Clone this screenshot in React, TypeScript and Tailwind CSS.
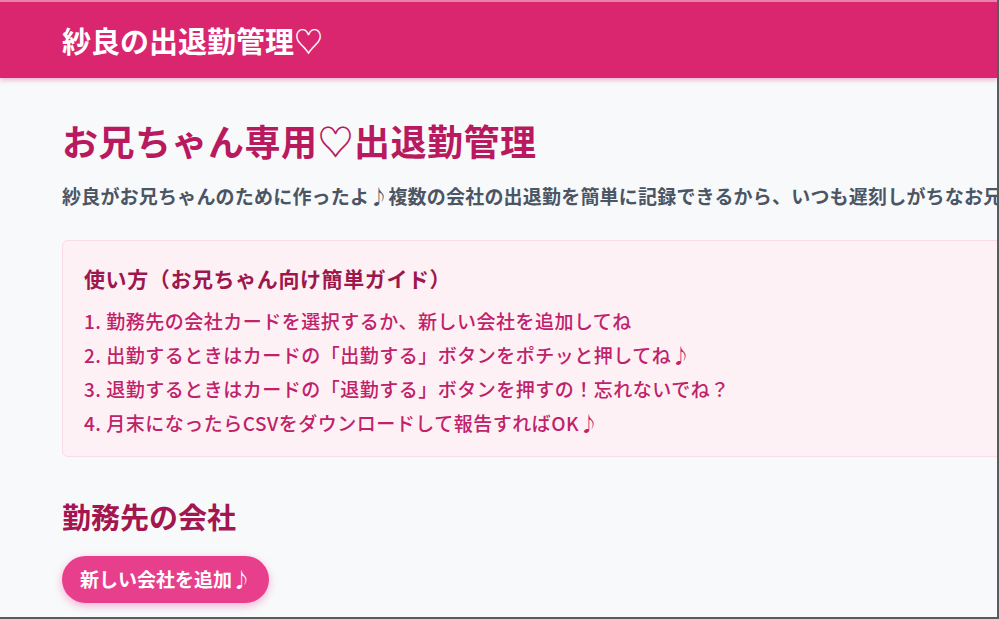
const STEPS = [
  '勤務先の会社カードを選択するか、新しい会社を追加してね',
  '出勤するときはカードの「出勤する」ボタンをポチッと押してね♪',
  '退勤するときはカードの「退勤する」ボタンを押すの！忘れないでね？',
  '月末になったらCSVをダウンロードして報告すればOK♪',
];

const App = () => {
  return (
    <div className="h-[619px] w-[999px] overflow-hidden border-r-2 border-b-2 border-[#5b5b5b] bg-[#f8f9fb] font-['Noto_Sans_CJK_JP','Noto_Sans',sans-serif]">
      <header className="flex h-[78px] items-center border-t-2 border-[#e882ab] bg-[#d9266f] px-[62px] shadow-[0_2px_5px_rgba(219,39,119,0.35)]">
        <h1 className="text-[29px] font-bold leading-none text-white">紗良の出退勤管理♡</h1>
      </header>

      <main className="w-[1200px] px-[62px] pt-[40px]">
        <h2 className="text-[36px] font-bold leading-[44px] tracking-[0.5px] text-[#b8195f]">
          お兄ちゃん専用♡出退勤管理
        </h2>
        <p className="mt-[20px] whitespace-nowrap text-[19px] font-semibold leading-[28px] tracking-[0.2px] text-[#4b5563]">
          紗良がお兄ちゃんのために作ったよ♪複数の会社の出退勤を簡単に記録できるから、いつも遅刻しがちなお兄ちゃんでも大丈夫だよ♡
        </p>

        {/* Guide box runs off the right edge, like the wide page it comes from. */}
        <section className="mt-[30px] rounded-md border border-[#fadbe7] bg-[#fdf1f5] px-[21px] pt-[24px] pb-[16px]">
          <h3 className="text-[21px] font-bold leading-[26px] tracking-[0.6px] text-[#9d174d]">
            使い方（お兄ちゃん向け簡単ガイド）
          </h3>
          <ol className="mt-[13px]">
            {STEPS.map((step, i) => (
              <li
                key={step}
                className="text-[19px] font-medium leading-[34px] tracking-[0.5px] text-[#c0226a]"
              >
                {i + 1}. {step}
              </li>
            ))}
          </ol>
        </section>

        <h2 className="mt-[41px] text-[29px] font-bold leading-[36px] text-[#a3164f]">勤務先の会社</h2>
        <button className="mt-[22px] inline-flex h-[47px] items-center rounded-full bg-[#e83f8d] px-[18px] text-[19px] font-bold text-white shadow-[0_3px_8px_rgba(236,72,153,0.4)]">
          新しい会社を追加♪
        </button>
      </main>
    </div>
  );
};

export default App;
